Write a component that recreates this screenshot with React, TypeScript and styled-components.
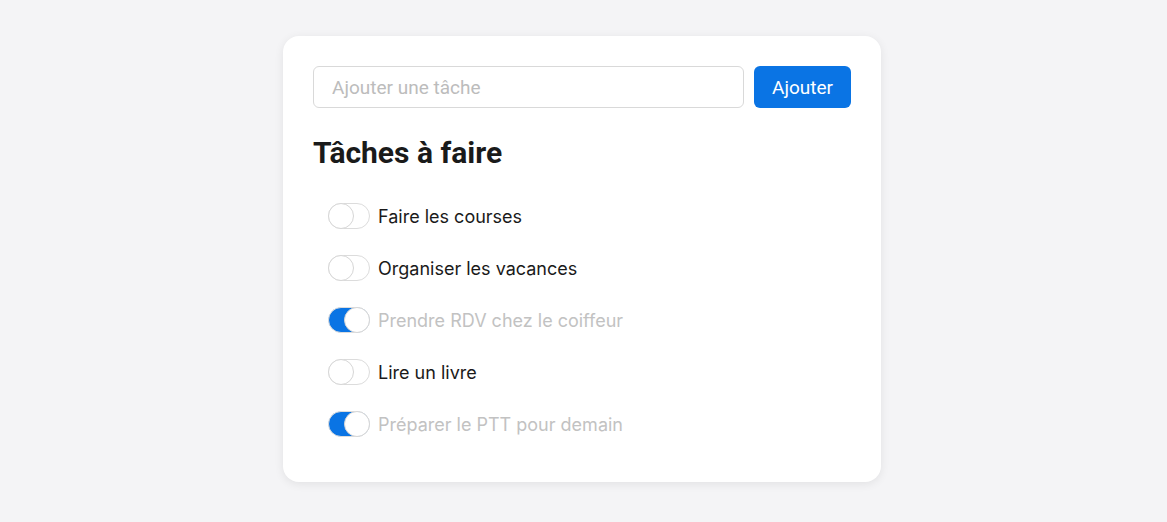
import * as React from 'react';
import styled, { createGlobalStyle } from 'styled-components';

const GlobalStyle = createGlobalStyle`
  body {
    margin: 0;
    background: #f4f4f6;
    font-family: Inter, "Noto Sans", sans-serif;
  }
`;

const Page = styled.div`
  display: flex;
  justify-content: center;
  align-items: flex-start;
  padding: 36px 3px 0 0;
  min-height: 522px;
  box-sizing: border-box;
`;

const Card = styled.div`
  width: 598px;
  box-sizing: border-box;
  background: #fff;
  border-radius: 16px;
  padding: 30px 30px 32px;
  box-shadow: 0 2px 10px rgba(0, 0, 0, 0.08);
`;

const Form = styled.form`
  display: flex;
  gap: 10px;
  height: 42px;
`;

const Input = styled.input`
  flex: 1;
  box-sizing: border-box;
  height: 42px;
  border: 1px solid #d9d9d9;
  border-radius: 6px;
  padding: 0 18px;
  font-family: Roboto, sans-serif;
  font-size: 19px;
  color: #222;
  outline: none;
  &::placeholder {
    color: #bcbcbc;
  }
`;

const Button = styled.button`
  width: 97px;
  height: 42px;
  border: none;
  border-radius: 6px;
  background: #0a74e4;
  color: #fff;
  font-family: Roboto, sans-serif;
  font-size: 19px;
  cursor: pointer;
`;

const Title = styled.h2`
  margin: 28px 0 0;
  font-family: Roboto, sans-serif;
  font-weight: 700;
  font-size: 30px;
  line-height: 34px;
  color: #1a1a1a;
`;

const List = styled.ul`
  list-style: none;
  margin: 20px 0 0;
  padding: 0 0 0 15px;
`;

const Row = styled.li`
  display: flex;
  align-items: center;
  gap: 8px;
  height: 52px;
`;

const Track = styled.button<{ $on: boolean }>`
  position: relative;
  width: 42px;
  height: 26px;
  padding: 0;
  border-radius: 13px;
  border: 1px solid #dcdcdc;
  background: ${p => (p.$on ? '#0a74e4' : '#fff')};
  cursor: pointer;
  box-sizing: border-box;
`;

const Thumb = styled.span<{ $on: boolean }>`
  position: absolute;
  top: -1px;
  left: ${p => (p.$on ? '15px' : '-1px')};
  width: 26px;
  height: 26px;
  box-sizing: border-box;
  border-radius: 50%;
  background: #fff;
  border: 1px solid #d6d6d6;
`;

const Label = styled.span<{ $done: boolean }>`
  font-size: 18px;
  color: ${p => (p.$done ? '#c2c2c2' : '#1a1a1a')};
`;

const initial = [
  { text: 'Faire les courses', done: false },
  { text: 'Organiser les vacances', done: false },
  { text: 'Prendre RDV chez le coiffeur', done: true },
  { text: 'Lire un livre', done: false },
  { text: 'Préparer le PTT pour demain', done: true },
];

export default function App() {
  const [tasks, setTasks] = React.useState(initial);
  const [value, setValue] = React.useState('');

  const add = (e: React.FormEvent) => {
    e.preventDefault();
    if (!value.trim()) return;
    setTasks([...tasks, { text: value.trim(), done: false }]);
    setValue('');
  };

  const toggle = (i: number) =>
    setTasks(tasks.map((t, j) => (j === i ? { ...t, done: !t.done } : t)));

  return (
    <Page>
      <GlobalStyle />
      <Card>
        <Form onSubmit={add}>
          <Input
            placeholder="Ajouter une tâche"
            value={value}
            onChange={e => setValue(e.target.value)}
          />
          <Button type="submit">Ajouter</Button>
        </Form>
        <Title>Tâches à faire</Title>
        <List>
          {tasks.map((t, i) => (
            <Row key={i}>
              <Track type="button" $on={t.done} onClick={() => toggle(i)}>
                <Thumb $on={t.done} />
              </Track>
              <Label $done={t.done}>{t.text}</Label>
            </Row>
          ))}
        </List>
      </Card>
    </Page>
  );
}
